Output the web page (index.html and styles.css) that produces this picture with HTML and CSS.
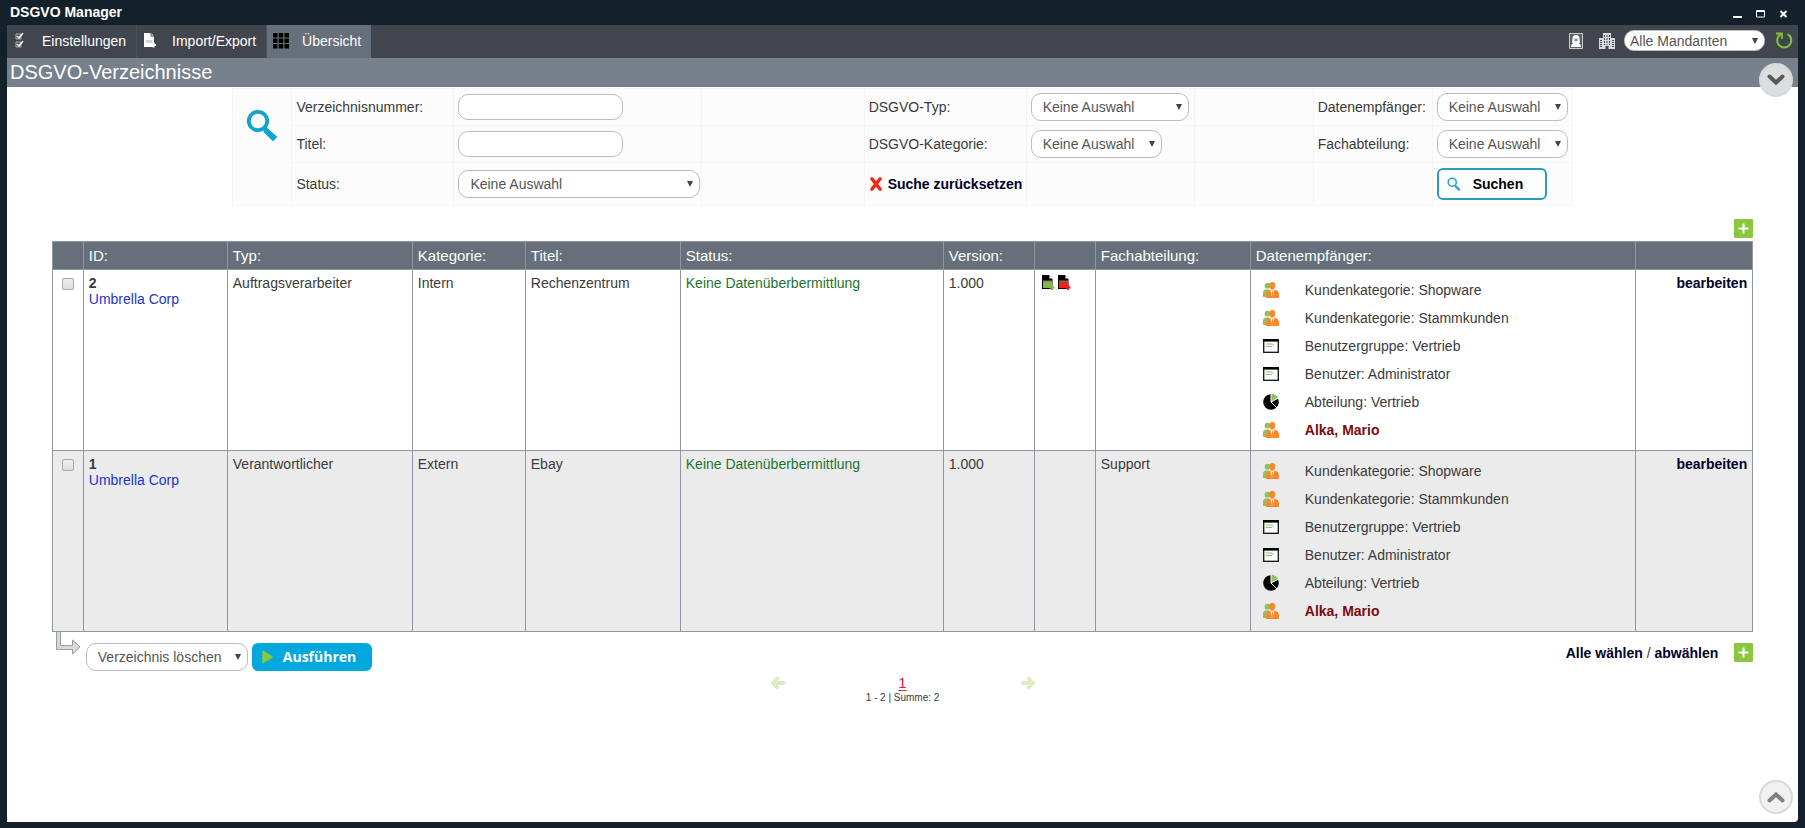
FILE: index.html
```html
<!DOCTYPE html>
<html lang="de">
<head>
    <meta charset="UTF-8">
    <meta name="viewport" content="width=device-width, initial-scale=1.0">
    <title>DSGVO Manager</title>
    <link rel="stylesheet" href="styles.css">
</head>
<body>
    <!-- Icons used more than once -->
    <svg class="sprite" aria-hidden="true">
        <symbol id="icon-plus" viewBox="0 0 19 19">
            <rect width="19" height="19" rx="1" fill="#8ac740"/>
            <path d="M9.5 4.5v10M4.5 9.5h10" stroke="#fff" stroke-width="2"/>
        </symbol>
        <symbol id="icon-search" viewBox="0 0 32 32">
            <circle cx="12" cy="12" r="9.2" fill="none" stroke="currentColor" stroke-width="3.800"/>
            <path d="M18 18l3.500 2 8.800 8-3.300 3.300-8.500-8.300z" fill="currentColor" stroke="currentColor" stroke-width="1.500"/>
        </symbol>
        <symbol id="icon-customers" viewBox="0 0 16 16">
            <circle cx="4.500" cy="3.700" r="2.900" fill="#8fc15c"/>
            <path d="M0 15v-4c0-2 1-3.500 3-3.500h3V15z" fill="#8fc15c"/>
            <path d="M9.300 0c2 0 3.200 1.400 3 3.600-.1 2-1 4-3 4s-2.900-2-3-4c-.2-2.200 1-3.600 3-3.600z" fill="#f58a2c"/>
            <path d="M3 16v-3.500c0-3 1.500-4.500 4-4.700h4.600c2.700.2 4.400 1.700 4.400 4.700V16z" fill="#f58a2c"/>
            <path d="M7.300 8.200h4l-1.500 6h-1z" fill="#fff"/>
            <path d="M9 9h.8l.4 4-.8 1.500-.8-1.500z" fill="#f58a2c"/>
        </symbol>
        <symbol id="icon-group" viewBox="0 0 16 14">
            <rect x=".7" y=".7" width="14.600" height="12.600" fill="#fff" stroke="#111" stroke-width="1.300"/>
            <path d="M0 1.300h16" stroke="#000" stroke-width="2.600"/>
            <path d="M2.500 5h7M2.500 7.500h6.500M9.500 6h1.500" stroke="#8fbf72" stroke-width="1"/>
        </symbol>
        <symbol id="icon-department" viewBox="0 0 16 16">
            <circle cx="8" cy="8" r="7.800" fill="#000"/>
            <path d="M8 8V0a8 8 0 0 1 7 4.200z" fill="#8fc15c"/>
            <path d="M8 0v8l7.500-4M8 8l6 6" fill="none" stroke="#fff" stroke-width="1"/>
        </symbol>
        <symbol id="icon-file" viewBox="0 0 13 15">
            <path d="M0 0h7l3.500 4v10H0z" fill="#000"/>
            <path d="M7.500 0v3.500h3z" fill="#fff"/>
            <path d="M1 6h9v7H1z" fill="currentColor"/>
            <path d="M1 6h9" stroke="#777" stroke-width="1"/>
            <path d="M10 10v5M7.500 12.500h5" stroke="currentColor" stroke-width="2"/>
        </symbol>
        <symbol id="icon-arrow" viewBox="0 0 16 14">
            <path d="M13.500 7H3M7.500 2.500L3 7l4.500 4.500" fill="none" stroke="#dcecc4" stroke-width="3.800" stroke-linecap="round"/>
        </symbol>
    </svg>

    <header class="titlebar">
        <span class="window-title">DSGVO Manager</span>
        <div class="window-controls">
            <button type="button" aria-label="Minimieren"><svg width="9" height="8"><path d="M0 7h9" stroke="#fff" stroke-width="2"/></svg></button>
            <button type="button" aria-label="Maximieren"><svg width="9" height="8"><path d="M.5.5h8v6.500h-8zM0 1.500h9" fill="none" stroke="#fff"/></svg></button>
            <button type="button" aria-label="Schließen"><svg width="9" height="8"><path d="M1.500 1l6 6M7.500 1l-6 6" stroke="#fff" stroke-width="2"/></svg></button>
        </div>
    </header>

    <div class="window">
        <nav class="toolbar">
            <a href="#" class="tab">
                <svg width="16" height="17" viewBox="0 0 16 17"><path d="M3 2h5v5H3zM3 10h5v5H3z" fill="none" stroke="#aaa"/><path d="M4 4l2 2 4-5M4 12l2 2 4-5" fill="none" stroke="#fff" stroke-width="1.500"/></svg>
                Einstellungen
            </a>
            <a href="#" class="tab">
                <svg width="16" height="17" viewBox="0 0 16 17"><path d="M1 1h7l3 3v11H1z" fill="#fff"/><path d="M8 1v3h3" fill="none" stroke="#41464e"/><path d="M3 8h6v3H3z" fill="#d0d2d4"/><path d="M10.500 10.500v5M8 13h5" stroke="#fff" stroke-width="2"/></svg>
                Import/Export
            </a>
            <a href="#" class="tab active">
                <svg width="16" height="17" viewBox="0 0 16 17"><path d="M0 1h4.500v4.500H0zM5.700 1h4.600v4.500H5.700zM11.500 1H16v4.500h-4.500zM0 6.500h4.500V11H0zM5.700 6.500h4.600V11H5.700zM11.500 6.500H16V11h-4.500zM0 12h4.500v4.500H0zM5.700 12h4.600v4.500H5.700zM11.500 12H16v4.500h-4.500z" fill="#000"/></svg>
                Übersicht
            </a>
            <div class="tools">
                <a href="#" aria-label="Benutzer"><svg width="14" height="16"><path d="M.5.500h13v15H.5z" fill="#5b6067" stroke="#ccc"/><path d="M7 2C4.500 2 3.500 3.500 3.500 5.500c0 2-.3 3-.8 4L4.500 10C2.800 10.800 2 12 2 14h10c0-2-.8-3.200-2.500-4l1.800-.5c-.5-1-.8-2-.8-4C10.500 3.500 9.500 2 7 2z" fill="#fff"/><path d="M5.500 5.500h3v2L7 9 5.500 7.500z" fill="#8b8f94"/></svg></a>
                <a href="#" aria-label="Mandant"><svg width="16" height="16"><path d="M4 0h8v16H4zM0 5h4v11H0zM12 5h4v11h-4z" fill="#d9dadb"/><path d="M5.500 2v10M8 2v10M10.500 2v10" stroke="#41464e" stroke-dasharray="2 1"/><path d="M2 7v8M14 7v8" stroke="#41464e" stroke-dasharray="1 1" stroke-width="2"/><path d="M6.500 13h3v3h-3z" fill="#41464e"/></svg></a>
                <select class="select client-select" aria-label="Mandant wählen"><option>Alle Mandanten</option></select>
                <a href="#" class="refresh" aria-label="Aktualisieren"><svg width="17" height="17"><path d="M11.500 2.200A7 7 0 1 1 5 2.200" fill="none" stroke="#85c13b" stroke-width="2"/><path d="M0 1.500h6V7" fill="none" stroke="#85c13b" stroke-width="1.800"/></svg></a>
            </div>
        </nav>

        <h1>DSGVO-Verzeichnisse</h1>

        <main>
            <form>
                <table class="search">
                    <colgroup>
                        <col class="s-icon"><col class="s-label"><col class="s-input"><col>
                        <col class="s-label"><col class="s-type"><col class="s-gap"><col class="s-gap"><col class="s-last">
                    </colgroup>
                    <tr>
                        <td rowspan="3" class="search-icon"><svg width="32" height="32"><use href="#icon-search"/></svg></td>
                        <td><label for="number">Verzeichnisnummer:</label></td>
                        <td><input type="text" id="number"></td>
                        <td></td>
                        <td><label for="type">DSGVO-Typ:</label></td>
                        <td><select class="select medium" id="type"><option>Keine Auswahl</option></select></td>
                        <td></td>
                        <td><label for="receiver">Datenempfänger:</label></td>
                        <td><select class="select" id="receiver"><option>Keine Auswahl</option></select></td>
                    </tr>
                    <tr>
                        <td><label for="title">Titel:</label></td>
                        <td><input type="text" id="title"></td>
                        <td></td>
                        <td><label for="category">DSGVO-Kategorie:</label></td>
                        <td><select class="select" id="category"><option>Keine Auswahl</option></select></td>
                        <td></td>
                        <td><label for="department">Fachabteilung:</label></td>
                        <td><select class="select" id="department"><option>Keine Auswahl</option></select></td>
                    </tr>
                    <tr class="last">
                        <td><label for="status">Status:</label></td>
                        <td><select class="select wide" id="status"><option>Keine Auswahl</option></select></td>
                        <td></td>
                        <td>
                            <a href="#" class="reset"><svg width="14" height="16"><path d="M3 3l8 10M11 3L3 13" stroke="#f02a10" stroke-width="3.600" stroke-linecap="round"/></svg>Suche zurücksetzen</a>
                        </td>
                        <td></td>
                        <td></td>
                        <td></td>
                        <td><button type="submit" class="btn-search"><svg width="14" height="14"><use href="#icon-search"/></svg>Suchen</button></td>
                    </tr>
                </table>
            </form>

            <div class="listing">
                <div class="add-row">
                    <a href="#" aria-label="Neu"><svg width="19" height="19"><use href="#icon-plus"/></svg></a>
                </div>

                <table class="records">
                    <colgroup>
                        <col class="c-check"><col class="c-id"><col class="c-type"><col class="c-category"><col class="c-title">
                        <col class="c-status"><col class="c-version"><col class="c-files"><col class="c-department"><col><col class="c-edit">
                    </colgroup>
                    <thead>
                        <tr>
                            <th></th>
                            <th>ID:</th>
                            <th>Typ:</th>
                            <th>Kategorie:</th>
                            <th>Titel:</th>
                            <th>Status:</th>
                            <th>Version:</th>
                            <th></th>
                            <th>Fachabteilung:</th>
                            <th>Datenempfänger:</th>
                            <th></th>
                        </tr>
                    </thead>
                    <tbody>
                        <tr>
                            <td class="check"><input type="checkbox" aria-label="Verzeichnis 2"></td>
                            <td><strong>2</strong><br><a href="#" class="company">Umbrella Corp</a></td>
                            <td>Auftragsverarbeiter</td>
                            <td>Intern</td>
                            <td>Rechenzentrum</td>
                            <td class="ok">Keine Datenüberbermittlung</td>
                            <td>1.000</td>
                            <td>
                                <div class="files">
                                    <a href="#" class="file-green" aria-label="Export"><svg width="13" height="15"><use href="#icon-file"/></svg></a>
                                    <a href="#" class="file-red" aria-label="PDF"><svg width="13" height="15"><use href="#icon-file"/></svg></a>
                                </div>
                            </td>
                            <td></td>
                            <td class="receivers">
                                <ul>
                                    <li><svg width="16" height="16"><use href="#icon-customers"/></svg>Kundenkategorie: Shopware</li>
                                    <li><svg width="16" height="16"><use href="#icon-customers"/></svg>Kundenkategorie: Stammkunden</li>
                                    <li><svg width="16" height="14"><use href="#icon-group"/></svg>Benutzergruppe: Vertrieb</li>
                                    <li><svg width="16" height="14"><use href="#icon-group"/></svg>Benutzer: Administrator</li>
                                    <li><svg width="16" height="16"><use href="#icon-department"/></svg>Abteilung: Vertrieb</li>
                                    <li class="person"><svg width="16" height="16"><use href="#icon-customers"/></svg>Alka, Mario</li>
                                </ul>
                            </td>
                            <td class="edit"><a href="#">bearbeiten</a></td>
                        </tr>
                        <tr>
                            <td class="check"><input type="checkbox" aria-label="Verzeichnis 1"></td>
                            <td><strong>1</strong><br><a href="#" class="company">Umbrella Corp</a></td>
                            <td>Verantwortlicher</td>
                            <td>Extern</td>
                            <td>Ebay</td>
                            <td class="ok">Keine Datenüberbermittlung</td>
                            <td>1.000</td>
                            <td></td>
                            <td>Support</td>
                            <td class="receivers">
                                <ul>
                                    <li><svg width="16" height="16"><use href="#icon-customers"/></svg>Kundenkategorie: Shopware</li>
                                    <li><svg width="16" height="16"><use href="#icon-customers"/></svg>Kundenkategorie: Stammkunden</li>
                                    <li><svg width="16" height="14"><use href="#icon-group"/></svg>Benutzergruppe: Vertrieb</li>
                                    <li><svg width="16" height="14"><use href="#icon-group"/></svg>Benutzer: Administrator</li>
                                    <li><svg width="16" height="16"><use href="#icon-department"/></svg>Abteilung: Vertrieb</li>
                                    <li class="person"><svg width="16" height="16"><use href="#icon-customers"/></svg>Alka, Mario</li>
                                </ul>
                            </td>
                            <td class="edit"><a href="#">bearbeiten</a></td>
                        </tr>
                    </tbody>
                </table>

                <div class="actions">
                    <svg class="branch" width="26" height="24"><path d="M.5 0v17.500h16v4.500l7.500-7-7.500-7v5.500H4.500V0" fill="#d6d8d9" stroke="#9a9da0"/></svg>
                    <select class="select action-select" aria-label="Aktion"><option>Verzeichnis löschen</option></select>
                    <button type="button" class="btn-run"><svg width="11" height="14"><path d="M1 1.500v11l9-5.500z" fill="#8ac740" stroke="#8ac740" stroke-width="1.500" stroke-linejoin="round"/></svg>Ausführen</button>
                    <div class="choose">
                        <span><a href="#">Alle wählen</a> / <a href="#">abwählen</a></span>
                        <a href="#" aria-label="Neu"><svg width="19" height="19"><use href="#icon-plus"/></svg></a>
                    </div>
                </div>

                <div class="pager">
                    <a href="#" aria-label="Zurück"><svg width="16" height="14"><use href="#icon-arrow"/></svg></a>
                    <a href="#" class="page">1</a>
                    <a href="#" class="next" aria-label="Weiter"><svg width="16" height="14"><use href="#icon-arrow"/></svg></a>
                </div>
                <p class="summary">1 - 2 | Summe: 2</p>
            </div>
        </main>

        <button type="button" class="scroll down" aria-label="Nach unten"><svg width="18" height="12"><path d="M2.500 2.500L9 8.500l6.500-6" fill="none" stroke="#55585c" stroke-width="4" stroke-linecap="round"/></svg></button>
        <button type="button" class="scroll up" aria-label="Nach oben"><svg width="18" height="12"><path d="M2.500 9.500L9 3.500l6.500 6" fill="none" stroke="#7f8081" stroke-width="4" stroke-linecap="round"/></svg></button>
    </div>
</body>
</html>
```
FILE: styles.css
```css
* {
    box-sizing: border-box;
}

body {
    margin: 0;
    padding: 0 7px 6px;
    min-height: 100vh;
    display: flex;
    flex-direction: column;
    background: #15212a;
    color: #3a3a3a;
    font-family: "Liberation Sans", Arial, sans-serif;
    font-size: 14px;
    line-height: 16px;
}

a {
    color: #00002a;
    text-decoration: none;
}

svg {
    display: block;
    flex: none;
}

button, select, input {
    font: inherit;
}

.sprite {
    position: absolute;
    width: 0;
    height: 0;
}

/* Window frame */
.titlebar {
    display: flex;
    justify-content: space-between;
    align-items: center;
    height: 25px;
    padding: 0 10px 2px 3px;
}

.window-title {
    color: #fff;
    font-weight: bold;
}

.window-controls {
    display: flex;
    gap: 14px;
}

.window-controls button {
    padding: 4px 0 0;
    border: none;
    background: none;
    cursor: pointer;
}

.window {
    position: relative;
    flex: 1;
    background: #fff;
    border-radius: 0 0 4px 0;
}

.toolbar {
    display: flex;
    height: 33px;
    background: #41464e;
}

.tab {
    display: flex;
    align-items: center;
    gap: 13px;
    padding: 0 10px 2px 6px;
    border-right: 1px solid #4b515a;
    color: #fff;
}

.tab.active {
    background: #67707a;
    border-right: none;
}

.tools {
    display: flex;
    align-items: center;
    gap: 16px;
    margin-left: auto;
    padding: 0 5px 2px 0;
}

h1 {
    margin: 0;
    padding: 0 3px;
    background: #77818b;
    color: #fff;
    font-size: 20px;
    font-weight: normal;
    line-height: 29px;
}

/* Form controls */
.select {
    appearance: none;
    display: block;
    width: 131px;
    height: 28px;
    padding: 0 11px;
    border: 1px solid #bbbcbd;
    border-radius: 10px;
    background: #fff url("data:image/svg+xml,%3Csvg xmlns='http://www.w3.org/2000/svg' width='6' height='6'%3E%3Cpath d='M0 0h6L3 6z' fill='%23444'/%3E%3C/svg%3E") no-repeat right 6px center;
    color: #555;
    cursor: pointer;
}

.select.medium {
    width: 158px;
}

.select.wide {
    width: 242px;
}

.select.action-select {
    width: 162px;
}

.select.client-select {
    width: 141px;
    height: 21px;
    margin-left: -7px;
    padding: 0 5px;
}

.refresh {
    margin-left: -5px;
}

input[type="text"] {
    display: block;
    width: 165px;
    height: 26px;
    padding: 0 10px;
    border: 1px solid #bbbcbd;
    border-radius: 10px;
    background: #fff;
}

/* Search */
.search {
    width: calc(75% - 3px);
    margin: 1px auto 0;
    table-layout: fixed;
    border-collapse: collapse;
    background: #fcfcfc;
}

.search td {
    height: 37px;
    padding: 0 4px;
    border: 1px solid #f5f5f5;
}

.search .last td {
    height: 43px;
}

.s-icon { width: 59px; }
.s-label { width: 162px; }
.s-input { width: 248px; }
.s-type { width: 168px; }
.s-gap { width: 119px; }
.s-last { width: 140px; }

.search .search-icon {
    padding: 20px 13px;
    vertical-align: top;
    color: #0ea5cf;
}

.reset {
    display: flex;
    align-items: center;
    gap: 5px;
    font-weight: bold;
    white-space: nowrap;
}

.btn-search {
    display: flex;
    align-items: center;
    gap: 12px;
    width: 110px;
    height: 32px;
    padding: 0 8px;
    border: 2px solid #2a9dbd;
    border-radius: 6px;
    background: #fff;
    color: #000;
    font-weight: bold;
    cursor: pointer;
}

.btn-search svg {
    color: #2aaacb;
}

/* Records */
.listing {
    width: 95%;
    margin: 0 auto;
}

.add-row {
    display: flex;
    justify-content: flex-end;
    padding: 13px 0 3px;
}

.records {
    width: 100%;
    table-layout: fixed;
    border-collapse: collapse;
}

.records th, .records td {
    padding: 5px;
    border: 1px solid #91979f;
    text-align: left;
    vertical-align: top;
}

.records th {
    background: #67707a;
    color: #fff;
    font-size: 15px;
    font-weight: normal;
    line-height: 17px;
}

.records tbody tr:nth-child(even) {
    background: #ebebec;
}

.c-check { width: 31px; }
.c-id { width: 144px; }
.c-type { width: 185px; }
.c-category { width: 113px; }
.c-title { width: 155px; }
.c-status { width: 263px; }
.c-version { width: 91px; }
.c-files { width: 61px; }
.c-department { width: 155px; }
.c-edit { width: 117px; }

.records .check {
    padding: 8px 9px;
}

input[type="checkbox"] {
    appearance: none;
    display: block;
    width: 12px;
    height: 12px;
    margin: 0;
    border: 1px solid #aaa;
    border-radius: 2px;
    background: linear-gradient(#efefef, #dcdcdc);
}

.company {
    color: #2334d0;
}

.records .ok {
    color: #1c7430;
}

.files {
    display: flex;
    gap: 3px;
    padding-left: 2px;
}

.file-green {
    color: #7fb851;
}

.file-red {
    color: #f0201c;
}

.records .receivers {
    padding: 6px 12px;
}

.receivers ul {
    margin: 0;
    padding: 0;
    list-style: none;
}

.receivers li {
    display: flex;
    align-items: center;
    gap: 26px;
    height: 28px;
}

.receivers .person {
    color: #7c0c0c;
    font-weight: bold;
}

.records .edit {
    text-align: right;
    font-weight: bold;
}

/* Footer of the list */
.actions {
    display: flex;
    align-items: flex-start;
    gap: 4px;
    padding-left: 4px;
}

.actions .action-select, .btn-run, .choose {
    margin-top: 11px;
}

.btn-run {
    display: flex;
    align-items: center;
    gap: 10px;
    width: 120px;
    height: 28px;
    padding: 0 10px;
    border: none;
    border-radius: 6px;
    background: #00a8de;
    color: #fff;
    font-family: "Open Sans", sans-serif;
    font-weight: bold;
    cursor: pointer;
}

.choose {
    display: flex;
    align-items: center;
    gap: 16px;
    margin-left: auto;
}

.choose span a {
    font-weight: bold;
}

.pager {
    display: flex;
    justify-content: center;
    align-items: center;
    gap: 112px;
    margin-top: 3px;
}

.page {
    width: 10px;
    color: #e0203c;
    font-size: 15px;
    line-height: 18px;
    text-align: center;
    text-decoration: underline;
    text-underline-offset: 2px;
}

.next {
    transform: rotate(180deg);
}

.summary {
    margin: 0;
    font-size: 10px;
    line-height: 12px;
    text-align: center;
}

/* Scroll buttons */
.scroll {
    position: absolute;
    right: 5px;
    display: flex;
    align-items: center;
    justify-content: center;
    width: 34px;
    height: 34px;
    padding: 0;
    border: 2px solid #d8d9da;
    border-radius: 50%;
    background: #f1f1f1;
    cursor: pointer;
}

.scroll.down {
    top: 38px;
    background: #dcddde;
}

.scroll.up {
    bottom: 8px;
}
```
